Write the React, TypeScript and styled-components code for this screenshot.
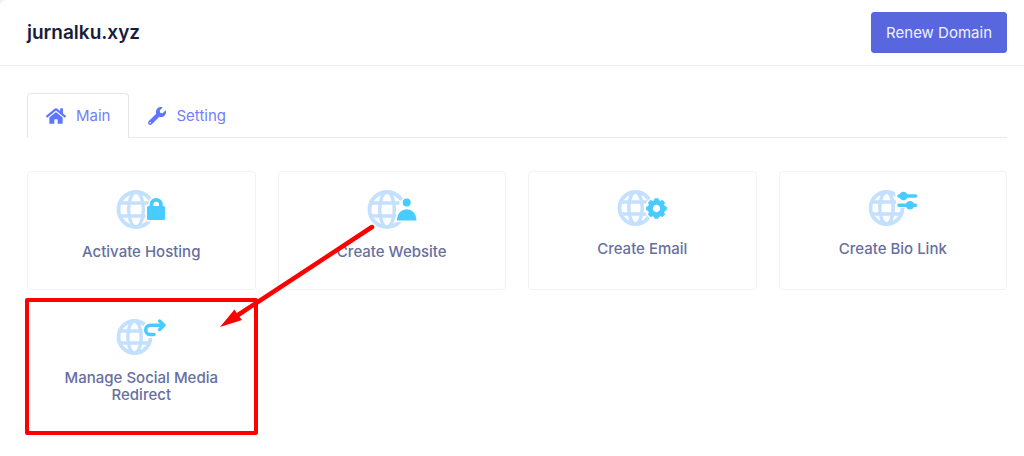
import React from "react";
import styled, { createGlobalStyle, css } from "styled-components";
import { FaHome, FaWrench } from "react-icons/fa";

const GlobalStyle = createGlobalStyle`
  *, *::before, *::after { box-sizing: border-box; }
  body {
    margin: 0;
    background: #f1f2f6;
    font-family: Inter, "Liberation Sans", sans-serif;
  }
`;

const Panel = styled.main`
  min-height: 100vh;
  overflow: hidden;
  background: #fff;
  border-top-left-radius: 6px;
`;

const Header = styled.header`
  display: flex;
  align-items: center;
  justify-content: space-between;
  padding: 12px 17px 12px 27px;
  border-bottom: 1px solid #eeeff2;
`;

const Title = styled.h1`
  margin: 0;
  font-size: 19px;
  line-height: 24px;
  font-weight: 600;
  color: #181c3a;
`;

const RenewButton = styled.button`
  height: 41px;
  padding: 0 14px;
  border: 1px solid #5867dd;
  border-radius: 3px;
  background: #5867dd;
  color: #f1f3ff;
  font: 400 15px/20px Inter, "Liberation Sans", sans-serif;
  cursor: pointer;
`;

const Content = styled.div`
  padding: 27px 17px 20px 27px;
`;

const Tabs = styled.nav`
  display: flex;
  height: 45px;
  border-bottom: 1px solid #e8e9ed;
`;

const Tab = styled.a<{ $active?: boolean }>`
  display: flex;
  align-items: center;
  gap: 10px;
  height: 45px;
  padding: 0 18px;
  border: 1px solid transparent;
  border-radius: 4px 4px 0 0;
  color: #7280fa;
  font-size: 15px;
  line-height: 20px;
  text-decoration: none;

  svg {
    color: #5d75ff;
  }

  ${(p) =>
    p.$active &&
    css`
      border-color: #e4e6ea;
      border-bottom-color: #fff;
      background: #fff;
    `}
`;

const CardGrid = styled.div`
  display: grid;
  grid-template-columns: repeat(4, 1fr);
  gap: 10px 22px;
  margin-top: 33px;
`;

const Card = styled.a<{ $highlighted?: boolean }>`
  position: relative;
  display: flex;
  flex-direction: column;
  align-items: center;
  gap: 14px;
  padding: 18px 30px 29px;
  border: 1px solid #f0f1f5;
  border-radius: 4px;
  color: #676fa0;
  text-decoration: none;

  ${(p) =>
    p.$highlighted &&
    css`
      &::after {
        content: "";
        position: absolute;
        inset: -3px;
        border: 4px solid #fe0000;
        border-radius: 2px;
      }
    `}
`;

const CardLabel = styled.span`
  font-size: 15px;
  line-height: 17px;
  font-weight: 500;
  text-align: center;
`;

const Arrow = styled.svg`
  position: absolute;
  right: -125px;
  bottom: 103px;
  z-index: 1;
  pointer-events: none;
`;

const PALE = "#c3e0ff";
const SKY = "#48ccff";

function Globe({ r }: { r: number }) {
  const cx = r + 2.5;
  const cy = r + 2;
  const dy = r * 0.37;
  const half = r * 0.93;
  return (
    <g fill="none" stroke={PALE} strokeWidth={3.8}>
      <circle cx={cx} cy={cy} r={r} />
      <ellipse cx={cx} cy={cy} rx={r * 0.42} ry={r} strokeWidth={3.5} />
      <path
        strokeWidth={3.5}
        d={`M${cx - half} ${cy - dy}H${cx + half}M${cx - half} ${cy + dy}H${cx + half}`}
      />
    </g>
  );
}

function LockIcon() {
  const shape = "M31 17.5a1.5 1.5 0 0 1 1.5-1.5h15a1.5 1.5 0 0 1 1.5 1.5v11a1.5 1.5 0 0 1-1.5 1.5h-15a1.5 1.5 0 0 1-1.5-1.5Z";
  const shackle = "M35.500 17v-2.500a4.700 4.700 0 0 1 9.400 0V17";
  return (
    <svg width="50" height="39" viewBox="0 0 50 39" aria-hidden="true">
      <Globe r={17.5} />
      <path d={shape} fill="#fff" stroke="#fff" strokeWidth="3" />
      <path d={shackle} fill="#fff" stroke="#fff" strokeWidth="7" />
      <path d={shape} fill={SKY} />
      <path d={shackle} fill="none" stroke={SKY} strokeWidth="3.800" />
    </svg>
  );
}

function PersonIcon() {
  const body = "M30 30.500v-1.500a9.700 9.700 0 0 1 19.400 0V30.500Z";
  return (
    <svg width="50" height="39" viewBox="0 0 50 39" aria-hidden="true">
      <Globe r={17.5} />
      <g fill="#fff" stroke="#fff" strokeWidth="3">
        <path d="M34 12h12v10H34Z" />
        <circle cx="39.7" cy="12.500" r="4" />
        <path d={body} />
      </g>
      <circle cx="39.7" cy="12.500" r="4" fill={SKY} />
      <path d={body} fill={SKY} />
    </svg>
  );
}

function GearIcon() {
  return (
    <svg width="50" height="36" viewBox="0 0 50 36" aria-hidden="true">
      <Globe r={16} />
      <circle cx="39.500" cy="18.500" r="11.800" fill="#fff" />
      <g transform="translate(39.500 18.500)">
        <circle r="6.200" fill="none" stroke={SKY} strokeWidth="5" />
        {[0, 45, 90, 135, 180, 225, 270, 315].map((a) => (
          <rect key={a} x="-2.300" y="-10.300" width="4.600" height="4" rx="1" fill={SKY} transform={`rotate(${a})`} />
        ))}
      </g>
    </svg>
  );
}

function SlidersIcon() {
  const lines = "M31 6H47.500M31 15.300H47.500";
  return (
    <svg width="50" height="36" viewBox="0 0 50 36" aria-hidden="true">
      <Globe r={16} />
      <path d="M27 1h23v17H31L28 13Z" fill="#fff" />
      <path d={lines} stroke={SKY} strokeWidth="3.600" strokeLinecap="round" />
      <circle cx="35.500" cy="6" r="4.200" fill={SKY} />
      <circle cx="42" cy="15.300" r="4.200" fill={SKY} />
    </svg>
  );
}

function RedirectIcon() {
  const hook = "M38 15.500H34.300a4.600 4.600 0 0 1 0-9.200H46";
  return (
    <svg width="50" height="36" viewBox="0 0 50 36" aria-hidden="true">
      <Globe r={16} />
      <path d="M30 4h12v15H33L28 14Z" fill="#fff" />
      <path d={hook} fill="#fff" stroke="#fff" strokeWidth="6.500" strokeLinecap="round" />
      <path d={hook} fill="none" stroke={SKY} strokeWidth="3.600" strokeLinecap="round" />
      <path d="M43.600 2L48 6.300L43.600 10.600" fill="none" stroke={SKY} strokeWidth="3.400" strokeLinecap="round" strokeLinejoin="round" />
    </svg>
  );
}

const actions = [
  { label: "Activate Hosting", Icon: LockIcon },
  { label: "Create Website", Icon: PersonIcon },
  { label: "Create Email", Icon: GearIcon },
  { label: "Create Bio Link", Icon: SlidersIcon },
  { label: "Manage Social Media Redirect", Icon: RedirectIcon, highlighted: true },
];

export default function App() {
  return (
    <>
      <GlobalStyle />
      <Panel>
        <Header>
          <Title>jurnalku.xyz</Title>
          <RenewButton type="button">Renew Domain</RenewButton>
        </Header>
        <Content>
          <Tabs>
            <Tab href="#main" $active aria-current="page">
              <FaHome size={20} />
              Main
            </Tab>
            <Tab href="#setting">
              <FaWrench size={18} />
              Setting
            </Tab>
          </Tabs>
          <CardGrid>
            {actions.map(({ label, Icon, highlighted }) => (
              <Card key={label} href="#" $highlighted={highlighted}>
                <Icon />
                <CardLabel>{label}</CardLabel>
                {highlighted && (
                  <Arrow width="160" height="108" viewBox="0 0 160 108" aria-hidden="true">
                    <path d="M152 6L18 94" stroke="#fe0000" strokeWidth="4.500" strokeLinecap="round" />
                    <path d="M0 106L14.500 88.500L18 94L22 99Z" fill="#fe0000" />
                  </Arrow>
                )}
              </Card>
            ))}
          </CardGrid>
        </Content>
      </Panel>
    </>
  );
}
